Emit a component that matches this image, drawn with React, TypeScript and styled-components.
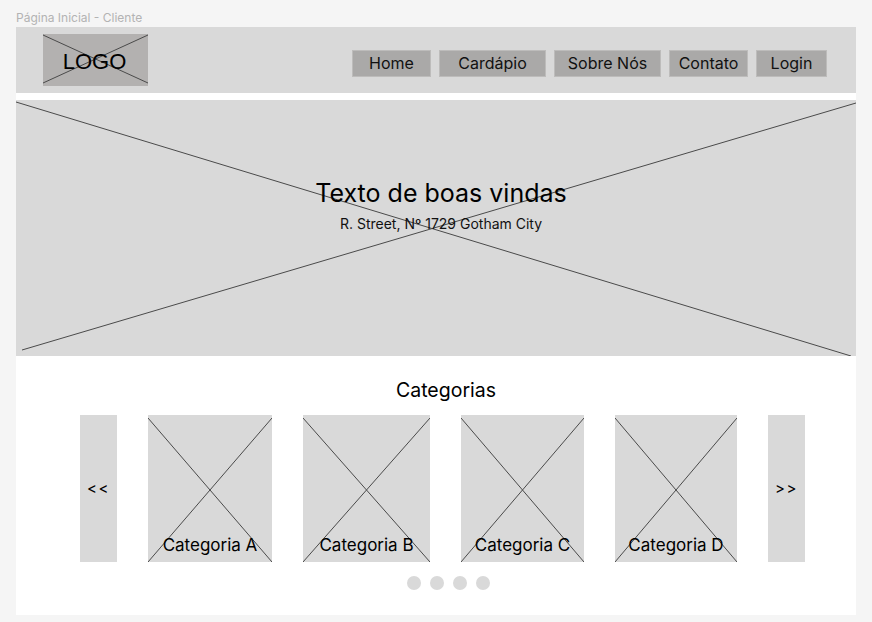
import React from "react";
import styled, { createGlobalStyle } from "styled-components";

const Global = createGlobalStyle`
  html, body { margin: 0; padding: 0; background: #f5f5f5; }
  body { font-family: Inter, "Noto Sans", sans-serif; color: #000; }
`;

const Page = styled.div`
  padding: 8px 16px 0 16px;
  width: 840px;
`;

const FrameTitle = styled.div`
  font-size: 12px;
  line-height: 17px;
  padding-top: 1px;
  height: 18px;
  color: #b3b3b3;
`;

const Frame = styled.div`
  background: #ffffff;
  width: 840px;
  height: 588px;
  display: flex;
  flex-direction: column;
`;

const Header = styled.header`
  height: 66px;
  background: #d9d9d9;
  display: flex;
  align-items: flex-start;
  justify-content: space-between;
  padding: 7px 29px 0 27px;
  box-sizing: border-box;
  margin-bottom: 7px;
`;

const Placeholder = styled.div<{ $bg: string }>`
  position: relative;
  background: ${(p) => p.$bg};
  overflow: hidden;
`;

const Lines = styled.svg`
  position: absolute;
  inset: 0;
  width: 100%;
  height: 100%;
  pointer-events: none;
`;

const Cross: React.FC<{ w: number; h: number; a: number[]; b: number[] }> = ({ w, h, a, b }) => (
  <Lines viewBox={`0 0 ${w} ${h}`} preserveAspectRatio="none">
    <line x1={a[0]} y1={a[1]} x2={a[2]} y2={a[3]} stroke="#4a4a4a" strokeWidth="1" vectorEffect="non-scaling-stroke" />
    <line x1={b[0]} y1={b[1]} x2={b[2]} y2={b[3]} stroke="#4a4a4a" strokeWidth="1" vectorEffect="non-scaling-stroke" />
  </Lines>
);

const Logo = styled(Placeholder)`
  width: 105px;
  height: 52px;
  display: flex;
  align-items: center;
  justify-content: center;
`;

const LogoText = styled.span`
  position: relative;
  font-family: "Liberation Sans", Arial, sans-serif;
  font-size: 22px;
  margin-left: -2px;
  margin-top: 3px;
`;

const Nav = styled.nav`
  display: flex;
  gap: 8px;
  margin-top: 16px;
`;

const NavButton = styled.div<{ $w: number }>`
  width: ${(p) => p.$w}px;
  height: 27px;
  box-sizing: border-box;
  background: #aaa9a8;
  border: 1px solid #bdbcbb;
  display: flex;
  align-items: center;
  justify-content: center;
  font-size: 16px;
  color: #111;
  padding-bottom: 1px;
`;

const Hero = styled(Placeholder)`
  height: 256px;
  display: flex;
  flex-direction: column;
  align-items: center;
  justify-content: flex-start;
  padding: 78px 0 0 10px;
  box-sizing: border-box;
`;

const HeroTitle = styled.h1`
  position: relative;
  margin: 0;
  font-weight: 400;
  font-size: 25px;
  line-height: 30px;
`;

const HeroSub = styled.p`
  position: relative;
  margin: 7px 0 0 0;
  font-size: 14px;
  line-height: 18px;
  color: #111;
`;

const Section = styled.section`
  flex: 1;
  display: flex;
  flex-direction: column;
  padding-top: 22px;
`;

const SectionTitle = styled.h2`
  margin: 0;
  font-weight: 400;
  font-size: 19.5px;
  line-height: 24px;
  text-align: center;
  padding-left: 20px;
`;

const Row = styled.div`
  display: flex;
  gap: 31px;
  margin: 13px 0 0 64px;
  height: 147px;
`;

const Arrow = styled.div`
  width: 37px;
  background: #d9d9d9;
  display: flex;
  align-items: center;
  justify-content: center;
  font-size: 15px;
  letter-spacing: 1.5px;
  box-sizing: border-box;
`;

const Card = styled(Placeholder)<{ $w: number }>`
  width: ${(p) => p.$w}px;
  display: flex;
  align-items: flex-end;
  justify-content: center;
`;

const CardLabel = styled.span`
  position: relative;
  font-size: 17px;
  line-height: 20px;
  margin-bottom: 7px;
`;

const Dots = styled.div`
  display: flex;
  justify-content: center;
  gap: 9px;
  margin-top: 14px;
  padding-left: 24px;
`;

const Dot = styled.span`
  width: 14px;
  height: 14px;
  border-radius: 50%;
  background: #d9d9d9;
`;

const navItems: [string, number][] = [
  ["Home", 79],
  ["Cardápio", 107],
  ["Sobre Nós", 107],
  ["Contato", 79],
  ["Login", 71],
];

const cards: [string, number][] = [
  ["Categoria A", 124],
  ["Categoria B", 127],
  ["Categoria C", 123],
  ["Categoria D", 122],
];

export default function App() {
  return (
    <>
      <Global />
      <Page>
        <FrameTitle>Página Inicial - Cliente</FrameTitle>
        <Frame>
          <Header>
            <Logo $bg="#b3b1b0">
              <Cross w={105} h={52} a={[0, 1, 105, 49]} b={[0, 49, 105, 1]} />
              <LogoText>LOGO</LogoText>
            </Logo>
            <Nav>
              {navItems.map(([t, w]) => (
                <NavButton key={t} $w={w}>{t}</NavButton>
              ))}
            </Nav>
          </Header>
          <Hero $bg="#d9d9d9">
            <Cross w={840} h={256} a={[0, 2, 835, 256]} b={[6, 250, 840, 3]} />
            <HeroTitle>Texto de boas vindas</HeroTitle>
            <HeroSub>R. Street, Nº 1729 Gotham City</HeroSub>
          </Hero>
          <Section>
            <SectionTitle>Categorias</SectionTitle>
            <Row>
              <Arrow>&lt;&lt;</Arrow>
              {cards.map(([t, w]) => (
                <Card key={t} $w={w} $bg="#d9d9d9">
                  <Cross w={w} h={147} a={[0, 3, w, 147]} b={[w, 3, 0, 147]} />
                  <CardLabel>{t}</CardLabel>
                </Card>
              ))}
              <Arrow>&gt;&gt;</Arrow>
            </Row>
            <Dots>
              <Dot />
              <Dot />
              <Dot />
              <Dot />
            </Dots>
          </Section>
        </Frame>
      </Page>
    </>
  );
}
